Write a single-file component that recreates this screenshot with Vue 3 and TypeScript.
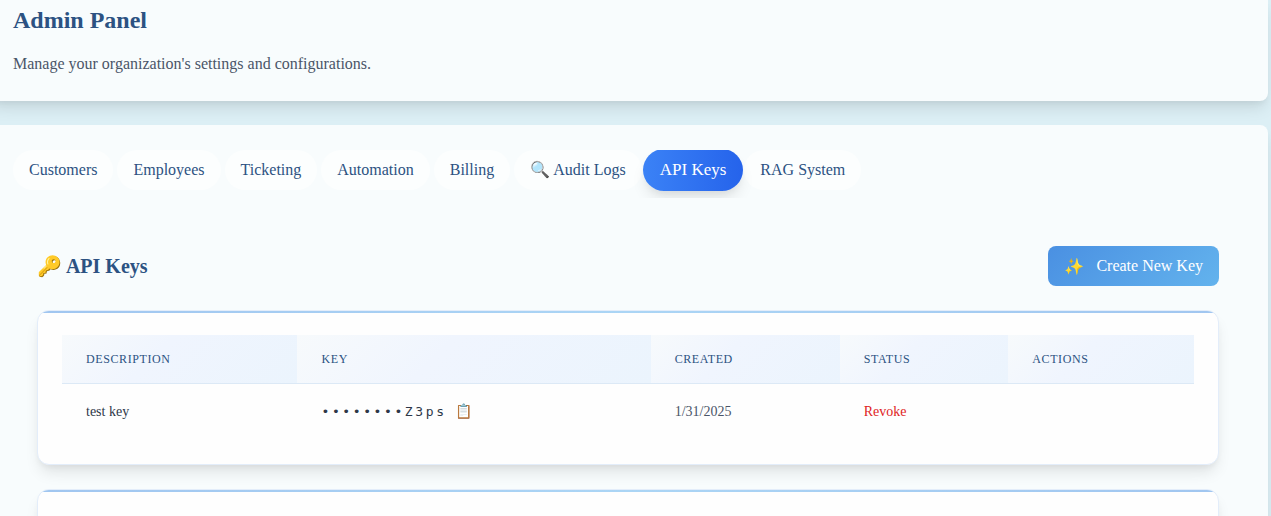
<script setup lang="ts">
import { ref } from 'vue'

interface ApiKey {
  description: string
  suffix: string
  created: string
}

const tabs: string[] = [
  'Customers',
  'Employees',
  'Ticketing',
  'Automation',
  'Billing',
  '🔍 Audit Logs',
  'API Keys',
  'RAG System',
]
const activeTab = ref('API Keys')

const keys = ref<ApiKey[]>([
  { description: 'test key', suffix: 'Z3ps', created: '1/31/2025' },
])

function copyKey(key: ApiKey) {
  navigator.clipboard?.writeText(key.suffix)
}

function revoke(key: ApiKey) {
  keys.value = keys.value.filter((k) => k !== key)
}
</script>

<template>
  <div class="page">
    <header class="panel heading">
      <h1>Admin Panel</h1>
      <p>Manage your organization's settings and configurations.</p>
    </header>

    <main class="panel content">
      <nav class="tabs">
        <button
          v-for="tab in tabs"
          :key="tab"
          type="button"
          class="tab"
          :class="{ active: tab === activeTab }"
          @click="activeTab = tab"
        >{{ tab }}</button>
      </nav>

      <section class="keys">
        <div class="toolbar">
          <h2>🔑 API Keys</h2>
          <button type="button" class="create"><span>✨</span><span>Create New Key</span></button>
        </div>

        <div class="card">
          <table>
            <colgroup>
              <col class="c-description" />
              <col class="c-key" />
              <col class="c-created" />
              <col class="c-status" />
              <col />
            </colgroup>
            <thead>
              <tr>
                <th scope="col">Description</th>
                <th scope="col">Key</th>
                <th scope="col">Created</th>
                <th scope="col">Status</th>
                <th scope="col">Actions</th>
              </tr>
            </thead>
            <tbody>
              <tr v-for="key in keys" :key="key.suffix">
                <td>{{ key.description }}</td>
                <td>
                  <div class="secret">
                    <code>••••••••{{ key.suffix }}</code>
                    <button type="button" class="copy" aria-label="Copy key" @click="copyKey(key)">📋</button>
                  </div>
                </td>
                <td class="date">{{ key.created }}</td>
                <td><button type="button" class="revoke" @click="revoke(key)">Revoke</button></td>
                <td></td>
              </tr>
            </tbody>
          </table>
        </div>

        <div class="card next"></div>
      </section>
    </main>
  </div>
</template>

<style>
body {
  background: #dceff5;
  overflow: hidden;
}
</style>

<style scoped>
.page {
  height: 100vh;
  overflow: hidden;
  padding-right: 3px;
  box-sizing: border-box;
  font-family: "Liberation Serif", "Times New Roman", serif;
  color: #2d3748;
  background: #dceff5;
}
button {
  font: inherit;
  border: 0;
  cursor: pointer;
}
.panel {
  background: #f8fcfd;
  box-shadow: 0 10px 15px -3px rgba(0, 0, 0, 0.1), 0 4px 6px -2px rgba(0, 0, 0, 0.05);
}
.heading {
  margin-left: -11px;
  padding: 4px 24px 25px;
  border-radius: 0 0 8px 8px;
}
h1 {
  margin: 0 0 16px;
  font-size: 24px;
  line-height: 32px;
  color: #2c5282;
}
p {
  margin: 0;
  line-height: 24px;
  color: #4a5568;
}
.content {
  margin: 24px 0 0 -11px;
  padding: 25px 25px 24px 24px;
  border-radius: 8px;
}
.tabs {
  display: flex;
  align-items: center;
  gap: 4px;
  height: 40px;
  padding-bottom: 8px;
  overflow: hidden;
}
.tab {
  flex: none;
  height: 40px;
  padding: 0 16px;
  border-radius: 21px;
  line-height: 24px;
  color: #2c5282;
  background: #fcfefe;
}
.tab.active {
  position: relative;
  height: 42px;
  margin: 0 -3px;
  padding: 0 17px;
  font-size: 17px;
  color: #fff;
  background: linear-gradient(90deg, #3b82f6, #2563eb);
  box-shadow: 0 10px 15px -3px rgba(0, 0, 0, 0.1), 0 4px 6px -2px rgba(0, 0, 0, 0.05);
}
.keys {
  margin-top: 24px;
  padding: 24px;
}
.toolbar {
  display: flex;
  align-items: center;
  justify-content: space-between;
  margin-bottom: 24px;
}
h2 {
  margin: 0;
  font-size: 20px;
  line-height: 28px;
  color: #2c5282;
}
.create {
  display: flex;
  align-items: center;
  gap: 12px;
  height: 40px;
  padding: 0 16px;
  border-radius: 8px;
  color: #fff;
  background: linear-gradient(135deg, #4a90e2, #63b3ed);
}
.card {
  position: relative;
  padding: 24px;
  border: 1px solid #e3edfa;
  border-radius: 12px;
  overflow: hidden;
  background: #fefefe;
  box-shadow: 0 10px 15px -3px rgba(0, 0, 0, 0.1), 0 4px 6px -2px rgba(0, 0, 0, 0.05);
}
.card::before {
  content: "";
  position: absolute;
  inset: 0 0 auto;
  height: 2px;
  background: linear-gradient(90deg, #a1c6f0, #abd5f5, #a1c6f0);
}
.card.next {
  height: 104px;
  margin-top: 24px;
}
table {
  width: 100%;
  table-layout: fixed;
  border-collapse: separate;
  border-spacing: 0;
}
.c-description { width: 20.8%; }
.c-key { width: 31.2%; }
.c-created { width: 16.7%; }
.c-status { width: 14.9%; }
th {
  padding: 16px 24px;
  border-bottom: 1px solid #dce9f6;
  font-size: 12px;
  font-weight: 400;
  line-height: 16px;
  letter-spacing: 0.05em;
  text-align: left;
  text-transform: uppercase;
  color: #2c5282;
  background: linear-gradient(135deg, #f7fafc, #f0f5fe 40%, #ebf4fd);
}
td {
  padding: 16px 24px;
  font-size: 14px;
  line-height: 24px;
}
.date {
  color: #4a5568;
}
.secret {
  display: flex;
  align-items: center;
  gap: 8px;
}
code {
  font-family: "DejaVu Sans Mono", monospace;
  font-size: 13px;
  letter-spacing: 0.2em;
}
.copy,
.revoke {
  padding: 0;
  background: none;
}
.revoke {
  color: #e02424;
}
</style>
